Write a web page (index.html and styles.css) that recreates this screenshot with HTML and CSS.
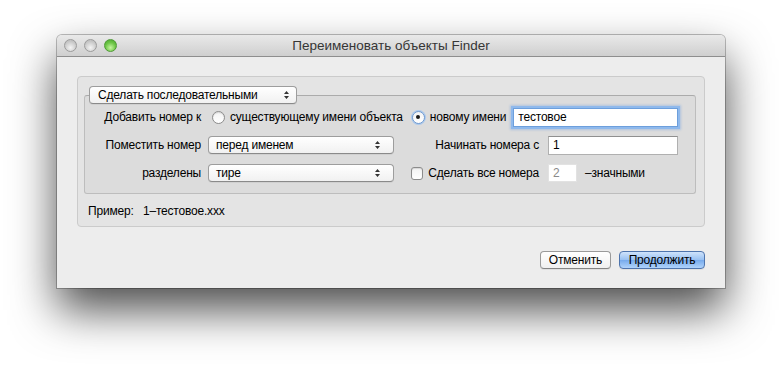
FILE: index.html
```html
<!DOCTYPE html>
<html>

<head>
    <meta charset="utf-8">
    <link rel="stylesheet" href="styles.css">
</head>

<body>
    <div class="window">
        <div class="titlebar">
            <div class="lights">
                <span class="light"></span>
                <span class="light"></span>
                <span class="light green"></span>
            </div>
            <div class="title">Переименовать объекты Finder</div>
        </div>

        <div class="content">
            <div class="group">
                <div class="popup legend">
                    <span>Сделать последовательными</span>
                    <svg class="arrows" width="5" height="8" viewBox="0 0 5 8"><path d="M2.5 0 L5 3 L0 3 Z M2.5 8 L5 5 L0 5 Z" fill="#333"/></svg>
                </div>

                <div class="box">
                    <div class="grid">
                        <div class="label">Добавить номер к</div>
                        <div class="row-wide">
                            <div class="choice"><span class="radio"></span>существующему имени объекта</div>
                            <div class="choice second"><span class="radio checked"></span>новому имени</div>
                            <div class="field focused">тестовое</div>
                        </div>

                        <div class="label">Поместить номер</div>
                        <div class="popup">
                            <span>перед именем</span>
                            <svg class="arrows" width="5" height="8" viewBox="0 0 5 8"><path d="M2.5 0 L5 3 L0 3 Z M2.5 8 L5 5 L0 5 Z" fill="#333"/></svg>
                        </div>
                        <div class="label mid">Начинать номера с</div>
                        <div class="field">1</div>

                        <div class="label">разделены</div>
                        <div class="popup">
                            <span>тире</span>
                            <svg class="arrows" width="5" height="8" viewBox="0 0 5 8"><path d="M2.5 0 L5 3 L0 3 Z M2.5 8 L5 5 L0 5 Z" fill="#333"/></svg>
                        </div>
                        <div class="label mid">
                            <div class="choice"><span class="checkbox"></span>Сделать все номера</div>
                        </div>
                        <div class="digits">
                            <div class="field small disabled">2</div>
                            <span>–значными</span>
                        </div>
                    </div>
                </div>

                <div class="example">Пример:&nbsp;&nbsp; 1–тестовое.xxx</div>
            </div>

            <div class="buttons">
                <div class="button">Отменить</div>
                <div class="button default">Продолжить</div>
            </div>
        </div>
    </div>
</body>

</html>
```

FILE: styles.css
```css
* {
    box-sizing: border-box;
}

html {
    background-color: #fff;
}

body {
    margin: 0;
    min-height: 367px;
    padding: 35px 0 0 57px;
    background-color: #fff;
    font-family: "Liberation Sans", Arial, sans-serif;
    font-size: 12px;
    letter-spacing: -0.2px;
    color: #000;
}

.window {
    width: 668px;
    height: 253px;
    background-color: #ededed;
    border-radius: 5px 5px 0 0;
    box-shadow: 0 0 0 1px rgba(0, 0, 0, 0.25), 0 22px 45px rgba(0, 0, 0, 0.7);
}

.titlebar {
    height: 22px;
    display: flex;
    align-items: center;
    position: relative;
    background: linear-gradient(#e9e9e9, #cfcfcf);
    border-bottom: 1px solid #8e8e8e;
    border-radius: 5px 5px 0 0;
}

.lights {
    display: flex;
    gap: 7px;
    padding-left: 7px;
}

.light {
    width: 13px;
    height: 13px;
    border-radius: 50%;
    border: 1px solid #9c9c9c;
    background: radial-gradient(circle at 50% 70%, #f4f4f4, #c4c4c4 70%);
}

.light.green {
    border-color: #4f9a36;
    background: radial-gradient(circle at 50% 70%, #c6f5a0, #6cc545 55%, #48a52e);
}

.title {
    position: absolute;
    left: 0;
    right: 0;
    text-align: center;
    font-size: 13.5px;
    letter-spacing: 0;
    color: #363636;
    pointer-events: none;
}

.content {
    padding: 19px 20px 0 20px;
}

.group {
    height: 151px;
    border: 1px solid #cbcbcb;
    border-radius: 4px;
    background-color: #e4e4e4;
    padding: 9px 8px 0 6px;
}

.popup {
    height: 18px;
    display: flex;
    align-items: center;
    justify-content: space-between;
    padding: 0 13px 0 7px;
    background: linear-gradient(#ffffff, #f1f1f1);
    border: 1px solid #9d9d9d;
    border-bottom-color: #8a8a8a;
    border-radius: 4px;
    box-shadow: 0 1px 0 rgba(0, 0, 0, 0.05);
    white-space: nowrap;
}

.popup.legend {
    width: 208px;
    margin-left: 5px;
    margin-bottom: -9px;
    padding: 0 7px 0 8px;
    position: relative;
    z-index: 1;
}

.arrows {
    flex: none;
}

.box {
    height: 99px;
    border: 1px solid #bdbdbd;
    border-top-color: #ababab;
    border-radius: 3px;
    background-color: #dcdcdc;
    padding: 11px 15px 0 0;
}

.grid {
    display: grid;
    grid-template-columns: 123px 186px 154px 130px;
    grid-auto-rows: 20px;
    row-gap: 8px;
    align-items: center;
}

.label {
    text-align: right;
    padding-right: 7px;
    white-space: nowrap;
}

.label.mid {
    padding-right: 9px;
    display: flex;
    justify-content: flex-end;
}

.row-wide {
    grid-column: 2 / 5;
    display: flex;
    align-items: center;
    white-space: nowrap;
}

.choice {
    display: flex;
    align-items: center;
    gap: 5px;
    margin-left: 4px;
}

.choice.second {
    margin-left: 9px;
}

.radio {
    width: 13px;
    height: 13px;
    border-radius: 50%;
    border: 1px solid #8c8c8c;
    background: linear-gradient(#f3f3f3, #ffffff);
    box-shadow: inset 0 1px 1px rgba(0, 0, 0, 0.12);
    display: flex;
    align-items: center;
    justify-content: center;
}

.radio.checked {
    border-color: #6a98d2;
    box-shadow: 0 0 0 1px #a9c8ee;
}

.radio.checked::after {
    content: "";
    width: 4px;
    height: 4px;
    border-radius: 50%;
    background-color: #1a1a1a;
}

.checkbox {
    width: 12px;
    height: 13px;
    border-radius: 3px;
    border: 1px solid #8c8c8c;
    background: linear-gradient(#f3f3f3, #ffffff);
    box-shadow: inset 0 1px 1px rgba(0, 0, 0, 0.12);
}

.field {
    height: 19px;
    display: flex;
    align-items: center;
    padding-left: 4px;
    background-color: #fff;
    border: 1px solid #b0b0b0;
    border-top-color: #8f8f8f;
    white-space: nowrap;
}

.field.focused {
    flex: 1;
    margin-left: 7px;
    border-color: #6d9fdc;
    box-shadow: 0 0 0 2px #8fb9ec, 0 0 2px 3px rgba(110, 160, 225, 0.4);
}

.field.small {
    width: 29px;
    height: 18px;
}

.field.disabled {
    color: #8a8a8a;
    border-color: #e2e2e2;
}

.digits {
    display: flex;
    align-items: center;
    gap: 8px;
    white-space: nowrap;
}

.example {
    margin: 10px 0 0 4px;
}

.buttons {
    display: flex;
    justify-content: flex-end;
    gap: 8px;
    margin-top: 24px;
}

.button {
    height: 18px;
    display: flex;
    align-items: center;
    justify-content: center;
    padding: 0 8px;
    min-width: 69px;
    background: linear-gradient(#ffffff, #f0f0f0);
    border: 1px solid #9a9a9a;
    border-bottom-color: #858585;
    border-radius: 4px;
    box-shadow: 0 1px 0 rgba(0, 0, 0, 0.06);
}

.button.default {
    min-width: 86px;
    border-color: #4e74ad;
    background: linear-gradient(#cfe3fb, #97c0f2 50%, #76aaec 51%, #b0d3fb);
}
```
